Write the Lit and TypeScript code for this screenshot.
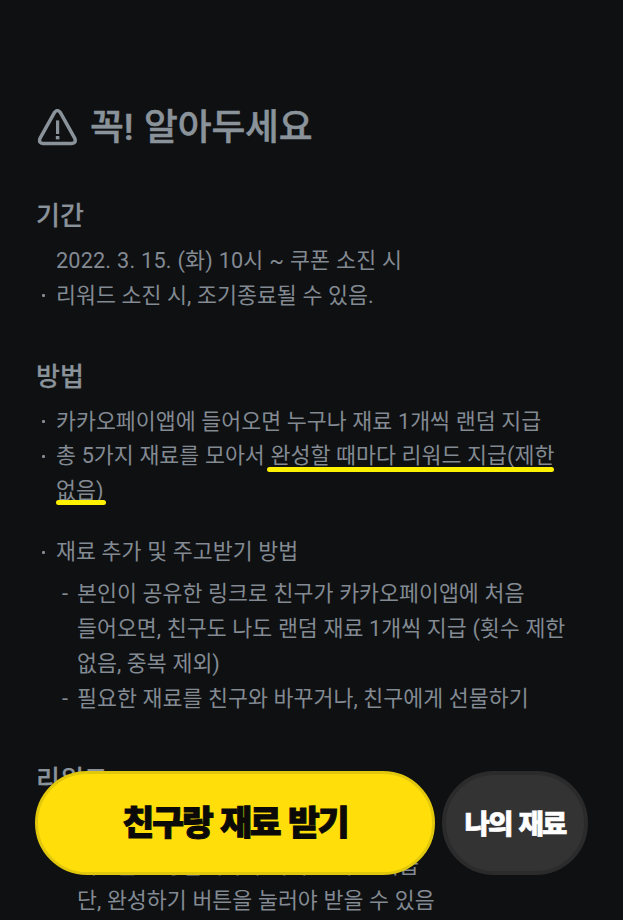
import { LitElement, html, css, svg } from "lit";
import { customElement } from "lit/decorators.js";

@customElement("warning-icon")
class WarningIcon extends LitElement {
  static styles = css`
    :host { display: block; width: 40px; height: 38px; }
    .icon { display: block; }
  `;
  render() {
    return html`<svg class="icon" width="40" height="38" viewBox="0 0 40 38" fill="none">
      ${svg`<path d="M17.4 3.6Q20.4 -0.4 23.4 3.6L37.8 29.4Q39.4 34.4 34.8 34.5H6Q1.4 34.4 3 29.4Z" stroke="#8a929a" stroke-width="3.5" stroke-linejoin="round"/>
      <path d="M20.6 11.4V25" stroke="#8a929a" stroke-width="3.2"/>
      <path d="M20.6 27V30.4" stroke="#8a929a" stroke-width="3.6"/>`}
    </svg>`;
  }
}

@customElement("app-root")
class AppRoot extends LitElement {
  static styles = css`
    :host {
      display: block;
      position: relative;
      box-sizing: border-box;
      width: 623px;
      height: 920px;
      overflow: hidden;
      background: #0e1012;
      color: #838a92;
      font-family: Roboto, "Noto Sans CJK KR", sans-serif;
      font-size: 21.7px;
      line-height: 34.7px;
      word-spacing: 0.3px;
      white-space: nowrap;
    }
    .page { padding: 102px 0 0 36px; }
    .title {
      display: flex;
      align-items: center;
      gap: 13px;
      height: 52px;
      margin: 0 0 42.4px 1px;
      font-size: 36.8px;
      font-weight: 500;
      line-height: 52px;
      word-spacing: 1.9px;
      letter-spacing: -0.18px;
      color: #8a929a;
      -webkit-text-stroke: 0.5px #8a929a;
    }
    .section { margin-bottom: 43.4px; }
    .heading {
      margin: 0 0 7.8px;
      font-size: 26px;
      font-weight: 500;
      line-height: 40px;
      color: #8a929a;
      -webkit-text-stroke: 0.2px #8a929a;
    }
    .list, .sublist { list-style: none; margin: 0; padding: 0; }
    .item { display: grid; grid-template-columns: 20px auto; }
    .period { letter-spacing: 0.15px; }
    .dot {
      width: 3px;
      height: 3px;
      margin: 15.5px 0 0 6px;
      border-radius: 1px;
      background: #838a92;
    }
    .covered { height: 34.7px; }
    .spaced { margin-top: 26.6px; }
    .sublist { margin: 7.3px 0 0 26px; }
    .sub { display: grid; grid-template-columns: 15px auto; }
    .mark { position: relative; }
    .mark::after {
      content: "";
      position: absolute;
      left: -3px;
      right: 0;
      bottom: -4px;
      height: 5px;
      border-radius: 3px;
      background: #fdf100;
    }
    .mark.short::after { left: 0; right: -3px; bottom: -2px; }
    .actions {
      position: absolute;
      left: 35px;
      top: 771px;
      display: flex;
      gap: 7px;
    }
    .button {
      box-sizing: border-box;
      height: 104px;
      padding: 0;
      border-radius: 52px;
      font-family: "Noto Sans CJK KR", sans-serif;
      font-weight: 900;
    }
    .primary {
      width: 400px;
      padding-bottom: 6px;
      border: 3px solid #e2c80c;
      background: #ffde0a;
      color: #0c0a08;
      font-size: 34.6px;
      letter-spacing: -2.1px;
      word-spacing: 2.6px;
      -webkit-text-stroke: 1px #0c0a08;
    }
    .secondary {
      width: 146px;
      padding-bottom: 2px;
      border: 4px solid #2b2b2b;
      background: #333;
      color: #fff;
      font-size: 27.6px;
      letter-spacing: -1.9px;
      word-spacing: 2.6px;
      -webkit-text-stroke: 0.6px #fff;
    }
  `;

  render() {
    return html`
      <main class="page">
        <h1 class="title"><warning-icon></warning-icon><span>꼭! 알아두세요</span></h1>

        <section class="section">
          <h2 class="heading">기간</h2>
          <ul class="list">
            <li class="item"><span></span><span class="period">2022. 3. 15. (화) 10시 ~ 쿠폰 소진 시</span></li>
            <li class="item"><span class="dot"></span><span>리워드 소진 시, 조기종료될 수 있음.</span></li>
          </ul>
        </section>

        <section class="section">
          <h2 class="heading">방법</h2>
          <ul class="list">
            <li class="item"><span class="dot"></span><span>카카오페이앱에 들어오면 누구나 재료 1개씩 랜덤 지급</span></li>
            <li class="item">
              <span class="dot"></span>
              <span>총 5가지 재료를 모아서 <span class="mark">완성할 때마다 리워드 지급(제한</span><br /><span class="mark short">없음)</span></span>
            </li>
            <li class="item spaced"><span class="dot"></span><span>재료 추가 및 주고받기 방법</span></li>
          </ul>
          <ul class="sublist">
            <li class="sub"><span>-</span><span>본인이 공유한 링크로 친구가 카카오페이앱에 처음<br />들어오면, 친구도 나도 랜덤 재료 1개씩 지급 (횟수 제한<br />없음, 중복 제외)</span></li>
            <li class="sub"><span>-</span><span>필요한 재료를 친구와 바꾸거나, 친구에게 선물하기</span></li>
          </ul>
        </section>

        <section class="section">
          <h2 class="heading">리워드</h2>
          <ul class="list">
            <li class="item covered"><span class="dot"></span></li>
          </ul>
          <ul class="sublist">
            <li class="sub"><span>-</span><span>재료를 완성할때마다 리워드 즉시 지급<br />단, 완성하기 버튼을 눌러야 받을 수 있음</span></li>
          </ul>
        </section>
      </main>

      <div class="actions">
        <button class="button primary">친구랑 재료 받기</button>
        <button class="button secondary">나의 재료</button>
      </div>
    `;
  }
}
